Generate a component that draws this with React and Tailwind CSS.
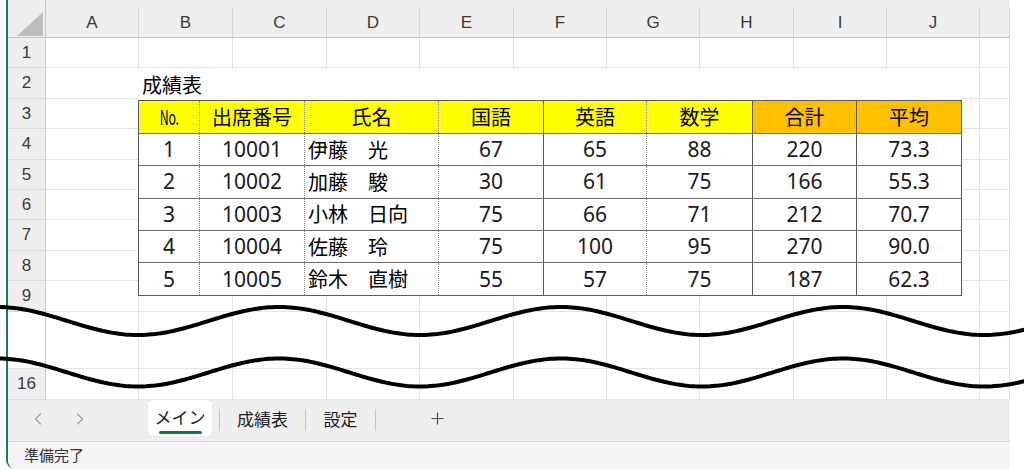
import { ChevronLeft, ChevronRight, Plus } from "lucide-react";

const letters = ["A", "B", "C", "D", "E", "F", "G", "H", "I", "J", ""];
const gridCols =
  "grid grid-cols-[38px_93px_94px_94px_93px_94px_93px_93px_94px_93px_93px_1fr]";

const rows = [
  { label: "1", h: "h-[30.4px]" },
  { label: "2", h: "h-[30.4px]" },
  { label: "3", h: "h-[30.4px]" },
  { label: "4", h: "h-[30.4px]" },
  { label: "5", h: "h-[30.4px]" },
  { label: "6", h: "h-[30.4px]" },
  { label: "7", h: "h-[30.4px]" },
  { label: "8", h: "h-[30.4px]" },
  { label: "9", h: "h-[30.4px]" },
  { label: "", h: "h-[57.4px]", gap: true },
  { label: "16", h: "h-[31px]" },
];

const students = [
  ["1", "10001", "伊藤　光", "67", "65", "88", "220", "73.3"],
  ["2", "10002", "加藤　駿", "30", "61", "75", "166", "55.3"],
  ["3", "10003", "小林　日向", "75", "66", "71", "212", "70.7"],
  ["4", "10004", "佐藤　玲", "75", "100", "95", "270", "90.0"],
  ["5", "10005", "鈴木　直樹", "55", "57", "75", "187", "62.3"],
];

const heads = ["No.", "出席番号", "氏名", "国語", "英語", "数学", "合計", "平均"];

// right border of each table column
const colBorder = [
  "w-[61px] border-r border-dotted border-[#8c8c8c]",
  "w-[105px] border-r border-dotted border-[#8c8c8c]",
  "w-[134px] border-r border-dotted border-[#8c8c8c]",
  "w-[105px] border-r border-[#5a5a5a]",
  "w-[103px] border-r border-dotted border-[#8c8c8c]",
  "w-[106px] border-r border-[#5a5a5a]",
  "w-[104px] border-r border-[#5a5a5a]",
  "w-[104px]",
];

function wavePath(cy) {
  const pts = [];
  for (let x = -10; x <= 1034; x += 3) {
    const y = cy + 14 * Math.cos((2 * Math.PI * (x - 138)) / 282);
    pts.push(`${x},${y.toFixed(2)}`);
  }
  return "M" + pts.join(" L");
}

function SheetRow({ row }) {
  return (
    <div className={`${gridCols} ${row.h}`}>
      <div
        className={`border-r border-b border-[#c9c9c9] flex items-center justify-center text-[17px] text-[#3a3a3a] ${
          row.gap ? "bg-white border-b-[#e3e3e3]" : "bg-[#efefef] border-b-[#dcdcdc]"
        }`}
        style={{ fontFamily: '"Liberation Sans", Arial, sans-serif' }}
      >
        {row.label}
      </div>
      {letters.map((l, i) => (
        <div key={i} className="border-r border-b border-[#e3e3e3]"></div>
      ))}
    </div>
  );
}

export default function App() {
  return (
    <div
      className="relative w-[1024px] h-[469px] bg-white overflow-hidden"
      style={{ fontFamily: '"Noto Sans CJK JP", "Noto Sans", sans-serif' }}
    >
      <div className="ml-[6px] w-[1004px] h-full border-l-2 border-[#1f7a4d] rounded-bl-[9px] flex flex-col overflow-hidden">
        {/* column header */}
        <div className={`${gridCols} h-[38px] bg-[#efefef] border-b border-[#c4c4c4]`}>
          <div className="relative border-r border-[#c4c4c4]">
            <svg className="absolute left-[9px] top-[12px]" width="26" height="24" viewBox="0 0 26 24">
              <polygon points="26,0 26,24 0,24" fill="#bdbdbd" />
            </svg>
          </div>
          {letters.map((l, i) => (
            <div key={i} className="pt-[8px] h-full">
              <div
                className="h-full border-r border-[#d6d6d6] flex items-center justify-center text-[17px] text-[#3a3a3a]"
                style={{ fontFamily: '"Liberation Sans", Arial, sans-serif' }}
              >
                {l}
              </div>
            </div>
          ))}
        </div>

        {rows.map((r, i) => (
          <SheetRow key={i} row={r} />
        ))}

        {/* sheet tabs */}
        <div className="h-[41px] bg-[#efefef] flex items-start text-[17px] text-[#222]">
          <div className="w-[140px] h-[38px] flex items-center text-[#9c9c9c]">
            <ChevronLeft size={20} strokeWidth={1.4} className="ml-[20px]" />
            <ChevronRight size={20} strokeWidth={1.4} className="ml-[22px]" />
          </div>
          <div className="w-[64px] h-[36px] bg-white rounded-[6px] flex flex-col items-center pt-[6px]">
            <span className="leading-[22px] text-[#1a1a1a]">メイン</span>
            <div className="w-[43px] h-[3px] rounded-full bg-[#1e7145] mt-[3px]"></div>
          </div>
          <div className="w-[7px]"></div>
          <div className="w-px h-[22px] mt-[9px] bg-[#c6c6c6]"></div>
          <div className="w-[85px] h-[38px] flex items-center justify-center">成績表</div>
          <div className="w-px h-[22px] mt-[9px] bg-[#c6c6c6]"></div>
          <div className="w-[69px] h-[38px] flex items-center justify-center">設定</div>
          <div className="w-px h-[22px] mt-[9px] bg-[#c6c6c6]"></div>
          <div className="w-[122px] h-[38px] flex items-center justify-center text-[#444]">
            <Plus size={19} strokeWidth={1.4} />
          </div>
        </div>

        {/* status bar */}
        <div className="flex-1 bg-[#f4f4f4] border-t border-[#d4d4d4] flex items-center pl-[16px] text-[15px] text-[#333]">
          準備完了
        </div>
      </div>

      {/* pasted table block over the grid */}
      <div className="absolute left-[138px] top-[69px] w-[824px] h-[226px] bg-white text-[20px] text-black">
        <div className="h-[31px] pl-[4px] flex items-end pb-[1px] leading-[28px]">成績表</div>
        <div className="border border-[#5a5a5a]">
          <div className="flex h-[33px] border-b border-[#6e6e6e]">
            {heads.map((h, i) => (
              <div
                key={i}
                className={`${colBorder[i]} ${
                  i >= 6 ? "bg-[#ffc000]" : "bg-[#ffff00]"
                } flex items-center justify-center`}
              >
                {i === 0 ? <span className="inline-block scale-x-[0.62] tracking-tight">No.</span> : h}
              </div>
            ))}
          </div>
          {students.map((s, r) => (
            <div
              key={r}
              className={`flex h-[32.3px] ${r < students.length - 1 ? "border-b border-[#6e6e6e]" : ""}`}
            >
              {s.map((v, i) => (
                <div
                  key={i}
                  className={`${colBorder[i]} flex items-center ${
                    i === 2 ? "justify-start pl-[3px]" : "justify-center text-[21px] text-[#1a1a1a]"
                  }`}
                  style={i === 2 ? undefined : { fontFamily: '"Noto Sans", sans-serif' }}
                >
                  {v}
                </div>
              ))}
            </div>
          ))}
        </div>
      </div>

      {/* wavy break lines */}
      <svg className="absolute left-0 top-0 pointer-events-none" width="1024" height="469">
        <path d={wavePath(321)} fill="none" stroke="#000" strokeWidth="4" />
        <path d={wavePath(372.5)} fill="none" stroke="#000" strokeWidth="4" />
      </svg>
    </div>
  );
}
